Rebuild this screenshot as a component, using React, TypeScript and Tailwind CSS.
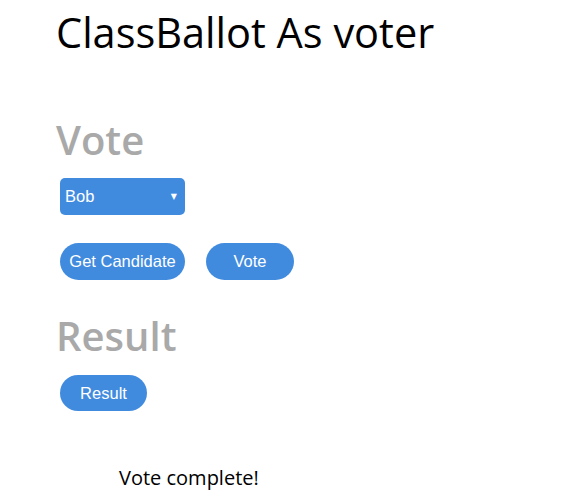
import React, { useState } from "react";

const App: React.FC = () => {
  const [candidate, setCandidate] = useState("Bob");

  return (
    <div className="min-h-[500px] bg-white font-['Open_Sans',sans-serif] pl-[56px]">
      <h1 className="pt-[6px] text-[41.5px] leading-[52px] text-black">
        ClassBallot As voter
      </h1>

      <h2 className="mt-[56px] text-[40px] leading-[52px] font-semibold text-[#a9a9a9]">
        Vote
      </h2>
      <div className="mt-[12px] pl-[4px]">
        <div className="relative w-[125px] h-[37px]">
          <select
            value={candidate}
            onChange={(e) => setCandidate(e.target.value)}
            className="appearance-none w-full h-full rounded-[5px] bg-[#418bdf] text-white font-['Liberation_Sans',Arial,sans-serif] text-[16.5px] pl-[5px] outline-none"
          >
            <option>Bob</option>
            <option>Alice</option>
          </select>
          <span className="pointer-events-none absolute right-[8px] inset-y-0 flex items-center text-white text-[8px] font-['DejaVu_Sans',sans-serif]">
            ▼
          </span>
        </div>
      </div>

      <div className="mt-[28px] pl-[4px] flex gap-[21px] font-['Liberation_Sans',Arial,sans-serif]">
        <button className="w-[125px] h-[37px] rounded-full bg-[#418bdf] text-white text-[16.5px]">
          Get Candidate
        </button>
        <button className="w-[88px] h-[37px] rounded-full bg-[#418bdf] text-white text-[16.5px]">
          Vote
        </button>
      </div>

      <h2 className="mt-[30px] text-[40px] leading-[52px] font-semibold text-[#a9a9a9]">
        Result
      </h2>
      <div className="mt-[13px] pl-[4px] font-['Liberation_Sans',Arial,sans-serif]">
        <button className="w-[87px] h-[36px] rounded-full bg-[#418bdf] text-white text-[16.5px]">
          Result
        </button>
      </div>

      <p className="mt-[53px] pl-[63px] text-[20px] leading-[28px] text-black">
        Vote complete!
      </p>
    </div>
  );
};

export default App;
